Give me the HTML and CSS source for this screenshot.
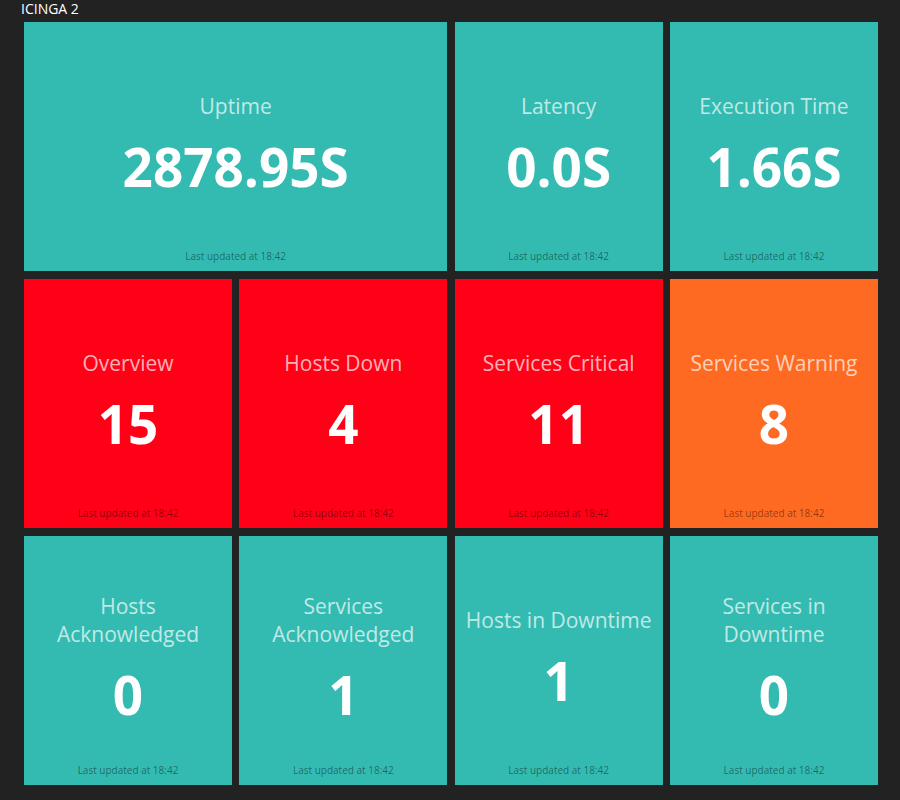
FILE: index.html
```html
<!DOCTYPE html>
<html>
<head>
<meta charset="utf-8">
<title>ICINGA 2</title>
<link rel="stylesheet" href="styles.css">
</head>
<body>
<h1 class="page-title">ICINGA 2</h1>
<div class="grid">
  <div class="tile teal wide">
    <h2 class="tile-title">Uptime</h2>
    <div class="tile-value">2878.95S</div>
    <p class="updated">Last updated at 18:42</p>
  </div>
  <div class="tile teal">
    <h2 class="tile-title">Latency</h2>
    <div class="tile-value">0.0S</div>
    <p class="updated">Last updated at 18:42</p>
  </div>
  <div class="tile teal">
    <h2 class="tile-title">Execution Time</h2>
    <div class="tile-value">1.66S</div>
    <p class="updated">Last updated at 18:42</p>
  </div>

  <div class="tile red">
    <h2 class="tile-title">Overview</h2>
    <div class="tile-value">15</div>
    <p class="updated">Last updated at 18:42</p>
  </div>
  <div class="tile red">
    <h2 class="tile-title">Hosts Down</h2>
    <div class="tile-value">4</div>
    <p class="updated">Last updated at 18:42</p>
  </div>
  <div class="tile red">
    <h2 class="tile-title">Services Critical</h2>
    <div class="tile-value">11</div>
    <p class="updated">Last updated at 18:42</p>
  </div>
  <div class="tile orange">
    <h2 class="tile-title">Services Warning</h2>
    <div class="tile-value">8</div>
    <p class="updated">Last updated at 18:42</p>
  </div>

  <div class="tile teal">
    <h2 class="tile-title">Hosts Acknowledged</h2>
    <div class="tile-value">0</div>
    <p class="updated">Last updated at 18:42</p>
  </div>
  <div class="tile teal">
    <h2 class="tile-title">Services Acknowledged</h2>
    <div class="tile-value">1</div>
    <p class="updated">Last updated at 18:42</p>
  </div>
  <div class="tile teal">
    <h2 class="tile-title">Hosts in Downtime</h2>
    <div class="tile-value">1</div>
    <p class="updated">Last updated at 18:42</p>
  </div>
  <div class="tile teal">
    <h2 class="tile-title">Services in Downtime</h2>
    <div class="tile-value">0</div>
    <p class="updated">Last updated at 18:42</p>
  </div>
</div>
</body>
</html>
```
FILE: styles.css
```css
html, body {
  margin: 0;
  padding: 0;
  background: #222222;
  font-family: "Open Sans", "DejaVu Sans", sans-serif;
  height: 800px;
  overflow: hidden;
}

.page-title {
  margin: 0;
  padding: 0 0 0 21px;
  height: 22px;
  line-height: 18px;
  font-size: 14px;
  font-weight: 400;
  color: #ffffff;
}

.grid {
  display: grid;
  grid-template-columns: repeat(4, 208px);
  grid-auto-rows: 249px;
  column-gap: 7.33px;
  row-gap: 8px;
  padding-left: 24px;
}

.tile {
  position: relative;
  display: flex;
  flex-direction: column;
  justify-content: center;
  align-items: center;
  text-align: center;
  padding: 0 8px 3px;
  box-sizing: border-box;
}

.tile.wide {
  grid-column: span 2;
}

.teal { background: #33bbb2; }
.red { background: #ff0016; }
.orange { background: #ff6a22; }

.tile-title {
  margin: 0 0 16px 0;
  font-size: 21px;
  line-height: 28px;
  font-weight: 400;
  color: rgba(255, 255, 255, 0.7);
}

.tile-value {
  font-size: 53px;
  line-height: 62px;
  font-weight: 700;
  color: #ffffff;
}

.updated {
  position: absolute;
  left: 0;
  right: 0;
  bottom: 8px;
  margin: 0;
  font-size: 10px;
  line-height: 14px;
  color: rgba(0, 0, 0, 0.45);
}
```
